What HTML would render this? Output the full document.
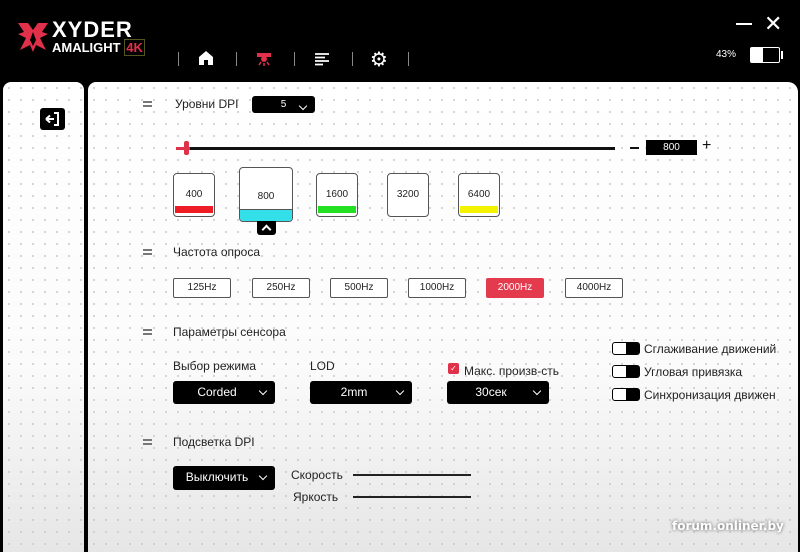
<!DOCTYPE html>
<html><head><meta charset="utf-8"><style>
*{margin:0;padding:0;box-sizing:border-box}
body{width:800px;height:548px;background:#000;position:relative;overflow:hidden;font-family:"Liberation Sans","DejaVu Sans",sans-serif;color:#222}
.a{position:absolute}
.panel{background-color:#fafafa;background-image:radial-gradient(#c8c8c8 0.8px,transparent 1px),linear-gradient(#fff 0%,#fbfbfb 60%,#e6e6e6 100%);background-size:12px 12px,100% 100%}
.t{font-size:12px;white-space:nowrap}
.ico{width:9px;height:6px;border-top:2px solid #777;border-bottom:2px solid #777}
.dd{background:#000;color:#fff;border-radius:3px;font-size:12px;text-align:center;line-height:23px;padding-right:14px}
.dd:after{content:"";position:absolute;right:9px;top:7px;width:5px;height:5px;border-right:1.5px solid #fff;border-bottom:1.5px solid #fff;transform:rotate(45deg)}
.box{border:1.5px solid #555;border-radius:4px;background:#fff;font-size:10px;text-align:center;overflow:hidden}
.hz{border:1.5px solid #555;border-radius:2px;background:#fff;font-size:10px;text-align:center;line-height:17px}
.tg{width:28px;height:13px;border:1.5px solid #000;border-radius:3px;background:linear-gradient(90deg,#fff 50%,#000 50%)}
</style></head><body>
<!-- logo -->
<svg class="a" style="left:16px;top:20px" width="34" height="34" viewBox="0 0 34 34"><path d="M2 3 L12 3 L17 10 L22 3 L32 3 L26 12 L32 14 L24 18 L30 30 L20 25 L17 32 L14 25 L4 30 L10 18 L2 14 L8 12 Z" fill="#e0304a"/><path d="M17 12 L20 20 L17 26 L14 20Z" fill="#000"/></svg>
<div class="a" style="left:52px;top:17px;color:#fff;font:bold 22px 'Liberation Sans',sans-serif;letter-spacing:1px">XYDER</div>
<div class="a" style="left:52px;top:40px;color:#fff;font:bold 13px 'Liberation Sans',sans-serif">AMALIGHT <span style="color:#e0304a;border:1px solid #552;padding:0 1px">4K</span></div>
<!-- nav -->
<div class="a" style="left:178px;top:52px;width:1px;height:14px;background:#888"></div>
<div class="a" style="left:236px;top:52px;width:1px;height:14px;background:#888"></div>
<div class="a" style="left:294px;top:52px;width:1px;height:14px;background:#888"></div>
<div class="a" style="left:352px;top:52px;width:1px;height:14px;background:#888"></div>
<div class="a" style="left:408px;top:52px;width:1px;height:14px;background:#888"></div>
<svg class="a" style="left:198px;top:50px" width="16" height="16" viewBox="0 0 16 16"><path d="M1 7 L8 1 L15 7 V15 H10 V10 H6 V15 H1Z" fill="#fff"/></svg>
<svg class="a" style="left:256px;top:51px" width="16" height="16" viewBox="0 0 16 16"><rect x="1" y="2" width="14" height="4" fill="#e0304a"/><circle cx="8" cy="8" r="3" fill="#e0304a"/><path d="M3 14 L5 11 M13 14 L11 11 M8 15 V12" stroke="#e0304a" stroke-width="1.5"/></svg>
<svg class="a" style="left:314px;top:52px" width="16" height="14" viewBox="0 0 16 14"><path d="M1 2H15M1 5.5H11M1 9H15M1 12.5H9" stroke="#fff" stroke-width="1.8"/></svg>
<div class="a" style="left:370px;top:47px;color:#fff;font-size:20px;font-family:'DejaVu Sans',sans-serif">⚙</div>
<div class="a" style="left:736px;top:23px;width:16px;height:2px;background:#fff"></div>
<div class="a" style="left:764px;top:11px;color:#fff;font:22px 'Liberation Sans',sans-serif">✕</div>
<div class="a t" style="left:716px;top:49px;color:#fff;font-size:10px">43%</div>
<div class="a" style="left:750px;top:47px;width:30px;height:16px;border:1.5px solid #fff;border-radius:2px"><div style="width:12px;height:100%;background:#fff"></div></div>
<div class="a" style="left:781px;top:51px;width:2px;height:8px;background:#fff"></div>
<!-- panels -->
<div class="a panel" style="left:3px;top:82px;width:81px;height:470px;border-radius:8px 8px 0 0"></div>
<div class="a" style="left:40px;top:108px;width:25px;height:22px;background:#000;border-radius:3px"></div>
<svg class="a" style="left:44px;top:111px" width="18" height="16" viewBox="0 0 18 16"><path d="M10 2H14V14H10" stroke="#fff" stroke-width="2" fill="none"/><path d="M2 8H10M2 8L6 4.5M2 8L6 11.5" stroke="#fff" stroke-width="2" fill="none"/></svg>
<div class="a panel" style="left:88px;top:82px;width:710px;height:470px;border-radius:8px 10px 0 0"></div>
<!-- DPI -->
<div class="a ico" style="left:143px;top:101px"></div>
<div class="a t" style="left:175px;top:97px">Уровни DPI</div>
<div class="a dd" style="left:252px;top:96px;width:63px;height:17px;line-height:17px;font-size:10px;padding:0">5</div>
<div class="a" style="left:176px;top:147px;width:439px;height:3px;background:#111"></div>
<div class="a" style="left:176px;top:147px;width:14px;height:3px;background:#e0304a"></div>
<div class="a" style="left:184px;top:141px;width:5px;height:14px;background:#e0304a;border-radius:2px"></div>
<div class="a" style="left:630px;top:147px;width:9px;height:2px;background:#111"></div>
<div class="a" style="left:646px;top:140px;width:51px;height:15px;background:#000;color:#fff;font-size:10px;text-align:center;line-height:15px">800</div>
<div class="a" style="left:702px;top:137px;font-size:16px;color:#111">+</div>
<div class="a box" style="left:173px;top:173px;width:42px;height:44px"><div style="margin-top:15px">400</div><div style="margin:6px 1px 0;height:7px;background:#ee1c24"></div></div>
<div class="a box" style="left:239px;top:167px;width:54px;height:55px"><div style="margin-top:23px">800</div><div style="margin-top:7px;height:14px;background:#33e0ea;border-top:1px solid #555"></div></div>
<div class="a" style="left:257px;top:221px;width:19px;height:14px;background:#000;border-radius:0 0 3px 3px"></div>
<div class="a" style="left:263px;top:226px;width:7px;height:7px;border-left:2px solid #fff;border-top:2px solid #fff;transform:rotate(45deg)"></div>
<div class="a box" style="left:316px;top:173px;width:42px;height:44px"><div style="margin-top:15px">1600</div><div style="margin:6px 1px 0;height:7px;background:#22e022"></div></div>
<div class="a box" style="left:387px;top:173px;width:42px;height:44px"><div style="margin-top:15px">3200</div></div>
<div class="a box" style="left:458px;top:173px;width:42px;height:44px"><div style="margin-top:15px">6400</div><div style="margin:6px 1px 0;height:7px;background:#f3f300"></div></div>
<!-- polling -->
<div class="a ico" style="left:143px;top:249px"></div>
<div class="a t" style="left:173px;top:245px">Частота опроса</div>
<div class="a hz" style="left:173px;top:278px;width:58px;height:20px">125Hz</div>
<div class="a hz" style="left:252px;top:278px;width:58px;height:20px">250Hz</div>
<div class="a hz" style="left:330px;top:278px;width:58px;height:20px">500Hz</div>
<div class="a hz" style="left:408px;top:278px;width:58px;height:20px">1000Hz</div>
<div class="a hz" style="left:486px;top:278px;width:58px;height:20px;background:#e33a4e;border-color:#e33a4e;color:#fff">2000Hz</div>
<div class="a hz" style="left:565px;top:278px;width:58px;height:20px">4000Hz</div>
<!-- sensor -->
<div class="a ico" style="left:143px;top:329px"></div>
<div class="a t" style="left:173px;top:325px">Параметры сенсора</div>
<div class="a t" style="left:173px;top:359px">Выбор режима</div>
<div class="a t" style="left:310px;top:359px">LOD</div>
<div class="a" style="left:448px;top:363px;width:11px;height:11px;background:#e0304a;border-radius:2px;color:#fff;font-size:8px;line-height:11px;text-align:center;font-family:'DejaVu Sans',sans-serif">✓</div>
<div class="a t" style="left:464px;top:364px">Макс. произв-сть</div>
<div class="a dd" style="left:173px;top:381px;width:102px;height:23px">Corded</div>
<div class="a dd" style="left:310px;top:381px;width:102px;height:23px">2mm</div>
<div class="a dd" style="left:447px;top:381px;width:102px;height:23px">30сек</div>
<div class="a tg" style="left:612px;top:342px"></div><div class="a t" style="left:644px;top:342px">Сглаживание движений</div>
<div class="a tg" style="left:612px;top:365px"></div><div class="a t" style="left:644px;top:365px">Угловая привязка</div>
<div class="a tg" style="left:612px;top:388px"></div><div class="a t" style="left:644px;top:388px">Синхронизация движен</div>
<!-- backlight -->
<div class="a ico" style="left:143px;top:439px"></div>
<div class="a t" style="left:173px;top:435px">Подсветка DPI</div>
<div class="a dd" style="left:173px;top:466px;width:102px;height:24px">Выключить</div>
<div class="a t" style="left:291px;top:468px">Скорость</div>
<div class="a" style="left:353px;top:474px;width:118px;height:2px;background:#222"></div>
<div class="a t" style="left:293px;top:490px">Яркость</div>
<div class="a" style="left:353px;top:496px;width:118px;height:2px;background:#222"></div>
<div class="a" style="left:672px;top:519px;color:#fff;font:bold 12px 'DejaVu Sans',sans-serif;text-shadow:0 0 3px #555">forum.onliner.by</div>
</body></html>
